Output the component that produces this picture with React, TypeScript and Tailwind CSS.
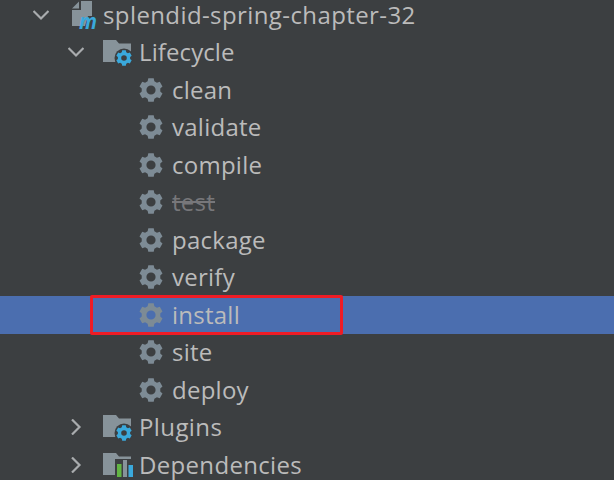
import type { ReactNode } from "react";

// six-tooth gear, teeth on top and bottom like the IDE's task icon
function gearPath(cx: number, cy: number, outer: number, root: number, hole: number) {
  const pts: string[] = [];
  for (let i = 0; i < 6; i++) {
    const a = -90 + i * 60;
    const list: [number, number][] = [
      [a - 21, root],
      [a - 13, outer],
      [a + 13, outer],
      [a + 21, root],
    ];
    for (const [deg, r] of list) {
      const rad = (deg * Math.PI) / 180;
      pts.push(`${(cx + r * Math.cos(rad)).toFixed(2)} ${(cy + r * Math.sin(rad)).toFixed(2)}`);
    }
  }
  return (
    `M${pts.join("L")}Z` +
    `M${cx - hole} ${cy}a${hole} ${hole} 0 1 0 ${hole * 2} 0a${hole} ${hole} 0 1 0 ${-hole * 2} 0Z`
  );
}

function Chevron({ open }: { open: boolean }) {
  return (
    <svg width="16" height="16" viewBox="0 0 16 16" fill="none" stroke="#a9acae" strokeWidth="2.2">
      {open ? <path d="M.5 4 8 11.5 15.500 4" /> : <path d="M4 .5 11.500 8 4 15.500" />}
    </svg>
  );
}

function Gear() {
  return (
    <svg width="24" height="24" viewBox="0 0 24 24" className="shrink-0">
      <path fill="#7d8b95" fillRule="evenodd" d={gearPath(12, 12, 12, 9.4, 4.6)} />
    </svg>
  );
}

function FolderIcon({ badge }: { badge: "gear" | "bars" }) {
  return (
    <svg width="30" height="30" viewBox="0 0 30 30" className="shrink-0 overflow-visible">
      <path fill="#87939a" d="M0 3h13l3 3.500h12V25H0z" />
      {badge === "gear" ? (
        <g>
          <circle cx="21" cy="21" r="9.500" fill="#3c3f41" />
          <path fill="#3aa9dc" fillRule="evenodd" d={gearPath(21, 21, 8, 6.2, 2.8)} />
        </g>
      ) : (
        <g>
          <rect x="12" y="9" width="18" height="19" fill="#3c3f41" />
          <rect x="14" y="14" width="4.500" height="13" fill="#62b543" />
          <rect x="20" y="10" width="4" height="17" fill="#87939a" />
          <rect x="25.500" y="15" width="4.500" height="12" fill="#3aa9dc" />
        </g>
      )}
    </svg>
  );
}

function ModuleIcon() {
  return (
    <svg width="31" height="30" viewBox="0 0 31 30" className="shrink-0 overflow-visible">
      <path fill="#87939a" d="M0 8.500 7 1.500v7z" />
      <path fill="#87939a" d="M9 1h11v15h-4l-3 10H0V10h9z" />
      <text
        x="7"
        y="29"
        fill="#3aa9dc"
        fontFamily="'Open Sans', sans-serif"
        fontSize="21"
        fontStyle="italic"
        fontWeight="700"
        textLength="18"
        lengthAdjust="spacingAndGlyphs"
      >
        m
      </text>
    </svg>
  );
}

function Row({
  indent,
  chevron,
  gap,
  icon,
  children,
  selected,
}: {
  indent: string;
  chevron?: "open" | "closed";
  gap?: string;
  icon: ReactNode;
  children: ReactNode;
  selected?: boolean;
}) {
  return (
    <div className={`flex h-[37.5px] items-center ${indent} ${selected ? "bg-[#4b6eaf]" : ""}`}>
      {chevron && (
        <span className={`flex w-[16px] shrink-0 justify-center ${gap}`}>
          <Chevron open={chevron === "open"} />
        </span>
      )}
      {icon}
      {children}
    </div>
  );
}

function Task({ name, selected, muted }: { name: string; selected?: boolean; muted?: boolean }) {
  return (
    <Row indent="pl-[139px]" icon={<Gear />} selected={selected}>
      <span
        className={`ml-[9px] text-[24px] leading-none tracking-[0.25px] ${
          muted ? "text-[#77777a] line-through" : "text-[#bbbbbb]"
        }`}
      >
        {name}
      </span>
    </Row>
  );
}

export default function App() {
  return (
    <div className="relative h-[480px] w-[614px] overflow-hidden bg-[#3c3f41] font-['Open_Sans',sans-serif]">
      <div className="mt-[-4px]">
        <Row indent="pl-[33px]" chevron="open" gap="mr-[23px]" icon={<ModuleIcon />}>
          <span className="text-[24px] leading-none tracking-[0.4px] text-[#bbbbbb]">
            splendid-spring-chapter-32
          </span>
        </Row>
        <Row indent="pl-[68px]" chevron="open" gap="mr-[19px]" icon={<FolderIcon badge="gear" />}>
          <span className="ml-[6px] text-[24px] leading-none tracking-[0.1px] text-[#bbbbbb]">
            Lifecycle
          </span>
        </Row>
        <Task name="clean" />
        <Task name="validate" />
        <Task name="compile" />
        <Task name="test" muted />
        <Task name="package" />
        <Task name="verify" />
        <Task name="install" selected />
        <Task name="site" />
        <Task name="deploy" />
        <Row indent="pl-[68px]" chevron="closed" gap="mr-[19px]" icon={<FolderIcon badge="gear" />}>
          <span className="ml-[6px] text-[24px] leading-none tracking-[0.4px] text-[#bbbbbb]">
            Plugins
          </span>
        </Row>
        <Row indent="pl-[68px]" chevron="closed" gap="mr-[19px]" icon={<FolderIcon badge="bars" />}>
          <span className="ml-[6px] text-[24px] leading-none tracking-[0.33px] text-[#bbbbbb]">
            Dependencies
          </span>
        </Row>
      </div>
      {/* red annotation box drawn over the selected row */}
      <div className="absolute left-[90px] top-[295px] h-[40px] w-[253px] rounded-[2px] border-[3px] border-[#ee1c25]" />
    </div>
  );
}
